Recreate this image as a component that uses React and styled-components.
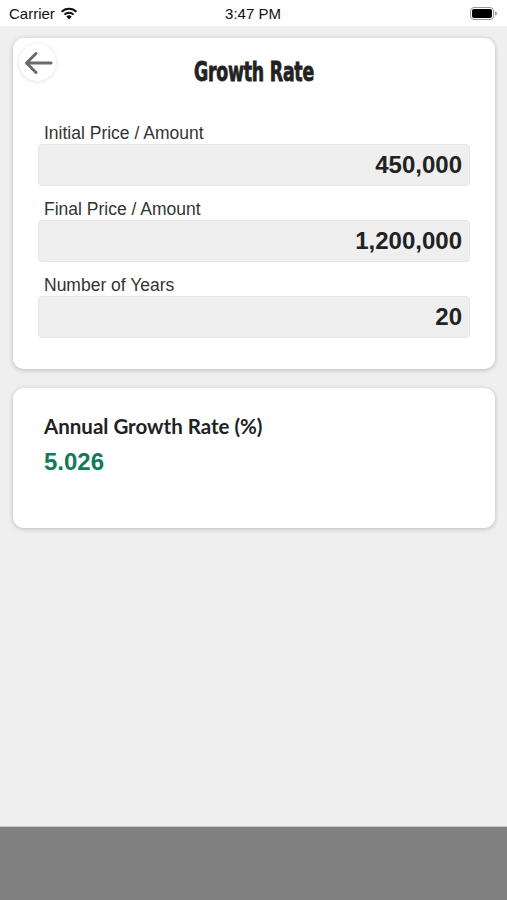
import React from 'react';
import styled, { createGlobalStyle } from 'styled-components';

const GlobalStyle = createGlobalStyle`
  html, body {
    margin: 0;
    padding: 0;
    background: #efefef;
  }
  * { box-sizing: border-box; }
`;

const Screen = styled.div`
  width: 507px;
  height: 900px;
  display: flex;
  flex-direction: column;
  background: #efefef;
  font-family: 'Liberation Sans', Arial, sans-serif;
  color: #222;
`;

const StatusBar = styled.div`
  height: 26px;
  background: #fff;
  display: grid;
  grid-template-columns: 1fr auto 1fr;
  align-items: center;
  padding: 0 10px 0 9px;
  font-family: 'Liberation Sans', Arial, sans-serif;
  font-size: 15px;
  color: #111;
`;

const Carrier = styled.div`
  display: flex;
  align-items: center;
  gap: 5px;
`;

const Clock = styled.div`
  font-weight: 500;
`;

const BatteryWrap = styled.div`
  display: flex;
  justify-content: flex-end;
  align-items: center;
`;

const Content = styled.main`
  flex: 1;
  display: flex;
  flex-direction: column;
  gap: 19px;
  padding: 12px 12px 0 13px;
`;

const Card = styled.section`
  position: relative;
  background: #fff;
  border-radius: 11px;
  box-shadow: 0 1px 5px rgba(0, 0, 0, 0.22);
  padding: ${p => p.$pad || '0'};
  min-height: ${p => p.$minHeight || 'auto'};
`;

const BackButton = styled.button`
  position: absolute;
  left: 6px;
  top: 6px;
  width: 37px;
  height: 37px;
  border-radius: 50%;
  border: none;
  background: #fff;
  box-shadow: 0 1px 5px rgba(0, 0, 0, 0.12);
  display: flex;
  align-items: center;
  justify-content: center;
  padding: 0;
`;

const Title = styled.h1`
  margin: 0;
  padding-top: 19px;
  text-align: center;
  font-family: 'DejaVu Sans', sans-serif;
  font-stretch: condensed;
  font-weight: 700;
  font-size: 26px;
  letter-spacing: -0.3px;
  -webkit-text-stroke: 0.8px #222;
  transform: scaleX(0.74);
  color: #222;
  line-height: 30px;
`;

const Fields = styled.div`
  display: flex;
  flex-direction: column;
  gap: 13px;
  padding: 36px 25px 31px 25px;
`;

const Field = styled.label`
  display: flex;
  flex-direction: column;
  gap: 0;
`;

const FieldLabel = styled.span`
  font-family: 'Liberation Sans', Arial, sans-serif;
  font-size: 17.5px;
  color: #333;
  padding-left: 6px;
  line-height: 21px;
`;

const ValueBox = styled.div`
  height: 42px;
  background: #efefef;
  border: 1px solid #e6e6e6;
  border-radius: 4px;
  display: flex;
  align-items: center;
  justify-content: flex-end;
  padding: 0 7px;
  font-family: 'Liberation Sans', Arial, sans-serif;
  font-weight: 700;
  font-size: 24px;
  color: #222;
`;

const ResultLabel = styled.div`
  font-family: 'Lato', 'Liberation Sans', sans-serif;
  font-weight: 700;
  font-size: 20.5px;
  color: #222;
  line-height: 24px;
`;

const ResultValue = styled.div`
  margin-top: 10px;
  font-family: 'Liberation Sans', Arial, sans-serif;
  font-weight: 700;
  font-size: 24px;
  color: #117a5b;
`;

const BottomBar = styled.div`
  height: 74px;
  background: #808080;
  border-top: 1px solid #c9c9c9;
`;

const fields = [
  { label: 'Initial Price / Amount', value: '450,000' },
  { label: 'Final Price / Amount', value: '1,200,000' },
  { label: 'Number of Years', value: '20' },
];

const WifiIcon = () => (
  <svg width="18" height="13" viewBox="0 0 18 13">
    <path d="M9 12.5 L6.3 9.6 A3.8 3.8 0 0 1 11.7 9.6 Z" fill="#111" />
    <path d="M4.4 7.6 A6.6 6.6 0 0 1 13.6 7.6" stroke="#111" strokeWidth="2" fill="none" />
    <path d="M1.6 4.8 A10.4 10.4 0 0 1 16.4 4.8" stroke="#111" strokeWidth="2" fill="none" />
  </svg>
);

const BatteryIcon = () => (
  <svg width="27" height="13" viewBox="0 0 27 13">
    <rect x="0.5" y="0.5" width="23" height="12" rx="3.5" fill="none" stroke="#999" />
    <rect x="2" y="2" width="20" height="9" rx="2" fill="#000" />
    <path d="M25 4.5 A2 2 0 0 1 25 8.5 Z" fill="#999" />
  </svg>
);

const ArrowLeft = () => (
  <svg width="30" height="24" viewBox="0 0 30 24">
    <path d="M28 12 H4 M13 2.5 L3.5 12 L13 21.5" stroke="#6b6b6b" strokeWidth="3" fill="none" strokeLinecap="round" strokeLinejoin="round" />
  </svg>
);

const App = () => {
  return (
    <Screen>
      <GlobalStyle />
      <StatusBar>
        <Carrier>
          Carrier <WifiIcon />
        </Carrier>
        <Clock>3:47 PM</Clock>
        <BatteryWrap>
          <BatteryIcon />
        </BatteryWrap>
      </StatusBar>

      <Content>
        <Card>
          <BackButton aria-label="Back">
            <ArrowLeft />
          </BackButton>
          <Title>Growth Rate</Title>
          <Fields>
            {fields.map(f => (
              <Field key={f.label}>
                <FieldLabel>{f.label}</FieldLabel>
                <ValueBox>{f.value}</ValueBox>
              </Field>
            ))}
          </Fields>
        </Card>

        <Card $pad="26px 31px" $minHeight="140px">
          <ResultLabel>Annual Growth Rate (%)</ResultLabel>
          <ResultValue>5.026</ResultValue>
        </Card>
      </Content>

      <BottomBar />
    </Screen>
  );
};

export default App;
